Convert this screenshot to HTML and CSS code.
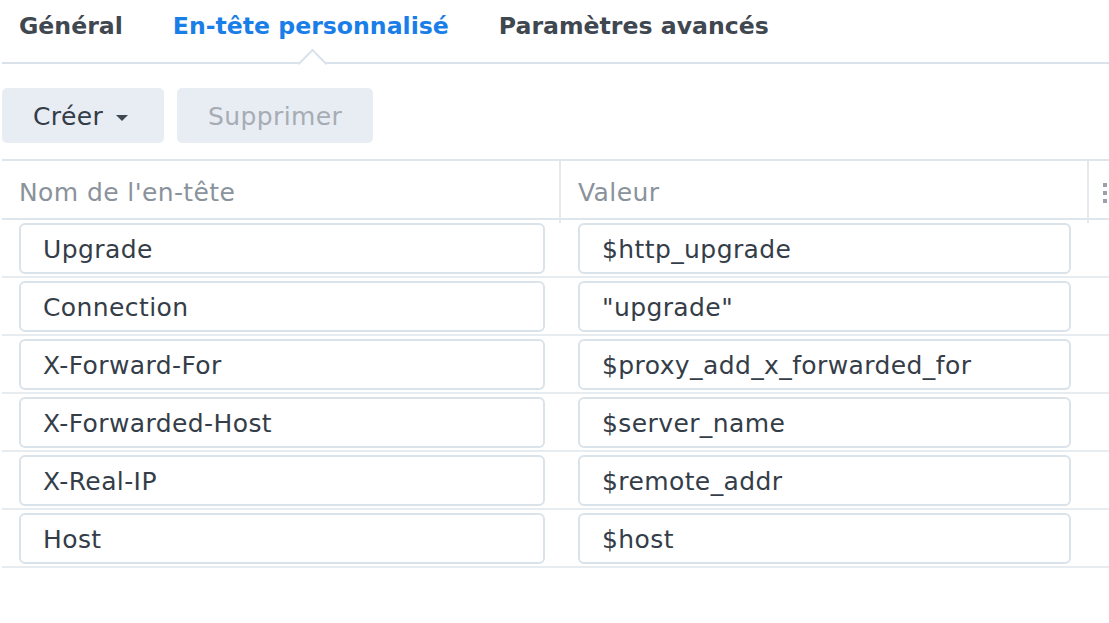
FILE: index.html
```html
<!DOCTYPE html>
<html lang="fr">
<head>
<meta charset="utf-8">
<title>En-tête personnalisé</title>
<link rel="stylesheet" href="styles.css">
</head>
<body>
<div class="page">
  <nav class="tabs">
    <div class="tab">Général</div>
    <div class="tab active">En-tête personnalisé</div>
    <div class="tab">Paramètres avancés</div>
  </nav>
  <div class="toolbar">
    <button class="btn">Créer <span class="caret"></span></button>
    <button class="btn disabled">Supprimer</button>
  </div>
  <div class="grid">
    <div class="row head">
      <div class="cell">Nom de l'en-tête</div>
      <div class="cell">Valeur</div>
      <div class="cell menu"><span class="dots"><i></i><i></i><i></i></span></div>
    </div>
    <div class="row"><div class="cell"><div class="field">Upgrade</div></div><div class="cell"><div class="field">$http_upgrade</div></div><div class="cell"></div></div>
    <div class="row"><div class="cell"><div class="field">Connection</div></div><div class="cell"><div class="field">"upgrade"</div></div><div class="cell"></div></div>
    <div class="row"><div class="cell"><div class="field">X-Forward-For</div></div><div class="cell"><div class="field">$proxy_add_x_forwarded_for</div></div><div class="cell"></div></div>
    <div class="row"><div class="cell"><div class="field">X-Forwarded-Host</div></div><div class="cell"><div class="field">$server_name</div></div><div class="cell"></div></div>
    <div class="row"><div class="cell"><div class="field">X-Real-IP</div></div><div class="cell"><div class="field">$remote_addr</div></div><div class="cell"></div></div>
    <div class="row"><div class="cell"><div class="field">Host</div></div><div class="cell"><div class="field">$host</div></div><div class="cell"></div></div>
  </div>
</div>
</body>
</html>
```
FILE: styles.css
```css
* { box-sizing: border-box; }
html, body { margin: 0; padding: 0; background: #fff; }
body {
  font-family: "DejaVu Sans", Verdana, sans-serif;
  font-size: 25px;
  letter-spacing: 0.4px;
  color: #333c47;
  width: 1109px;
  overflow: hidden;
}
.page { padding-left: 2px; }

.tabs {
  display: flex;
  gap: 50px;
  height: 64px;
  padding-left: 17px;
  border-bottom: 2px solid #d9e2eb;
}
.tab {
  position: relative;
  font-weight: bold;
  font-size: 23.6px;
  letter-spacing: 0;
  line-height: 52px;
  color: #3f4751;
}
.tab.active { color: #1a7ee8; }
.tab.active::after {
  content: "";
  position: absolute;
  left: 50%;
  bottom: -12px;
  width: 19px;
  height: 19px;
  margin-left: -9px;
  background: #fff;
  border-left: 2px solid #d9e2eb;
  border-top: 2px solid #d9e2eb;
  transform: rotate(45deg);
}

.toolbar {
  display: flex;
  gap: 13px;
  margin-top: 24px;
}
.btn {
  font-family: inherit;
  font-size: 25px;
  letter-spacing: 0.4px;
  height: 55px;
  border: none;
  border-radius: 5px;
  background: #e8edf4;
  color: #333c47;
  padding: 2px 31px 0;
  display: flex;
  align-items: center;
}
.btn:first-child { width: 162px; }
.btn.disabled { width: 196px; color: #a6acb4; }
.caret {
  display: inline-block;
  margin-left: 13px;
  margin-top: 2px;
  border-left: 6px solid transparent;
  border-right: 6px solid transparent;
  border-top: 6px solid #3f4751;
}

.grid {
  margin-top: 16px;
  border-top: 2px solid #dde5ed;
}
.row {
  display: grid;
  grid-template-columns: 559px 528px 1fr;
  height: 58px;
  border-bottom: 2px solid #e7ecf1;
}
.row.head {
  height: 59px;
  border-bottom: 2px solid #dde5ed;
}
.head .cell {
  color: #8a929b;
  padding-left: 17px;
  line-height: 57px;
  border-right: 2px solid #e3e9ef;
}
.head .cell.menu { border-right: none; padding-left: 14px; }
.dots { display: flex; flex-direction: column; gap: 4px; padding-top: 19px; }
.dots i { display: block; width: 4px; height: 4px; background: #9aa1a9; }
.cell { padding: 3px 16px 2px 17px; }
.row .cell:nth-child(2) { padding-right: 18px; }
.field {
  height: 51px;
  border: 2px solid #dae2ea;
  border-radius: 6px;
  padding: 2px 0 0 22px;
  line-height: 45px;
  color: #343d48;
  white-space: nowrap;
  overflow: hidden;
}
```
